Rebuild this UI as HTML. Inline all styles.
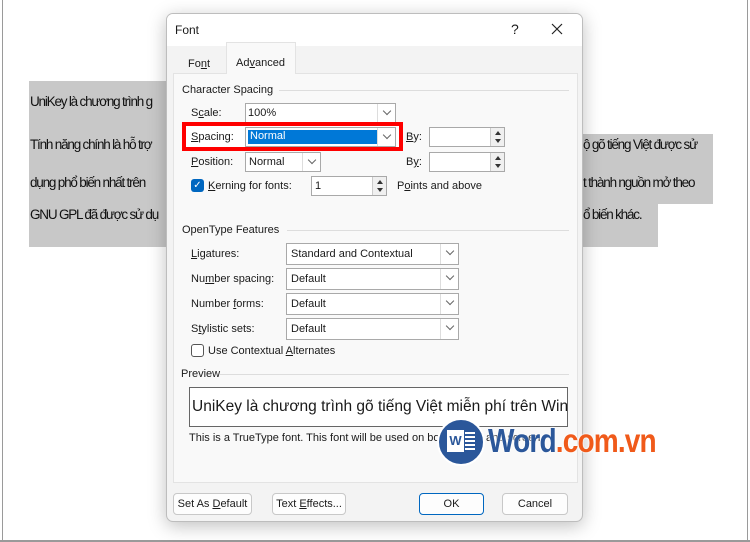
<!DOCTYPE html>
<html><head><meta charset="utf-8"><style>
*{box-sizing:border-box;margin:0;padding:0}
body{width:750px;height:542px;background:#fff;position:relative;overflow:hidden;font-family:"Liberation Sans",sans-serif;font-size:11px;color:#1a1a1a}
.a{position:absolute}
.doc{font-size:13.5px;letter-spacing:-1.2px;color:#111;white-space:nowrap}
.gray{background:#c8c8c8}
.dlg{left:166px;top:13px;width:417px;height:509px;background:#f3f3f3;border:1px solid #bdbdbd;border-radius:7px;box-shadow:0 4px 18px rgba(0,0,0,.25);overflow:hidden}
.title{left:0;top:0;width:417px;height:32px;background:#fff}
.panel{left:6px;top:59px;width:405px;height:410px;background:#f9f9f9;border:1px solid #e3e3e3}
.dd{background:#fff;border:1px solid #a9a9a9}
.dd i{position:absolute;right:0;top:0;bottom:0;width:18px;border-left:1px solid #ddd}
.dd i:after{content:"";position:absolute;left:6px;top:4px;width:5px;height:5px;border-right:1px solid #666;border-bottom:1px solid #666;transform:rotate(45deg)}
.sp{background:#fff;border:1px solid #a9a9a9}
.sp b{position:absolute;right:0;top:0;bottom:0;width:14px;border-left:1px solid #ccc;background:#f0f0f0}
.sp b:before{content:"";position:absolute;left:4px;top:3px;border:3px solid transparent;border-bottom:4px solid #333;border-top:0}
.sp b:after{content:"";position:absolute;left:4px;bottom:3px;border:3px solid transparent;border-top:4px solid #333;border-bottom:0}
.btn{background:#fdfdfd;border:1px solid #c8c8c8;border-radius:4px;text-align:center;line-height:20px}
.line{height:1px;background:#ddd}
</style></head><body>
<div class="a" style="left:2px;top:0;width:1px;height:542px;background:#9a9a9a"></div>
<div class="a" style="left:0;top:540px;width:750px;height:2px;background:#9a9a9a"></div>
<div class="a" style="left:747px;top:0;width:1px;height:542px;background:#9a9a9a"></div>
<div class="a gray" style="left:29px;top:81px;width:140px;height:166px"></div>
<div class="a gray" style="left:583px;top:134px;width:130px;height:70px"></div>
<div class="a gray" style="left:583px;top:204px;width:75px;height:43px"></div>
<div class="a doc" style="left:30px;top:94px">UniKey là chương trình g</div>
<div class="a doc" style="left:30px;top:137px">Tính năng chính là hỗ trợ</div>
<div class="a doc" style="left:30px;top:175px">dụng phổ biến nhất trên</div>
<div class="a doc" style="left:30px;top:207px">GNU GPL đã được sử dụ</div>
<div class="a doc" style="left:583px;top:137px">ộ gõ tiếng Việt được sử</div>
<div class="a doc" style="left:583px;top:175px">t thành nguồn mở theo</div>
<div class="a doc" style="left:583px;top:207px">ổ biến khác.</div>

<div class="a dlg">
 <div class="a title"></div>
 <div class="a" style="left:8px;top:9px;font-size:12px">Font</div>
 <div class="a" style="left:344px;top:7px;font-size:14px">?</div>
 <svg class="a" style="left:383px;top:8px" width="14" height="14"><path d="M2 2L12 12M12 2L2 12" stroke="#222" stroke-width="1.2"/></svg>
 <div class="a panel"></div>
 <div class="a" style="left:59px;top:28px;width:70px;height:32px;background:#f9f9f9;border:1px solid #e3e3e3;border-bottom:none"></div>
 <div class="a" style="left:21px;top:44px"><span>Fo<u>n</u>t</span></div>
 <div class="a" style="left:69px;top:43px">Ad<u>v</u>anced</div>
 <div class="a" style="left:15px;top:70px">Character Spacing</div>
 <div class="a line" style="left:112px;top:76px;width:290px"></div>
 <div class="a" style="left:24px;top:93px">S<u>c</u>ale:</div>
 <div class="a dd" style="left:78px;top:89px;width:151px;height:20px"><span class="a" style="left:2px;top:3px">100%</span><i></i></div>
 <div class="a" style="left:15px;top:108px;width:221px;height:29px;border:4px solid #f00;background:#fff"></div>
 <div class="a" style="left:24px;top:117px"><u>S</u>pacing:</div>
 <div class="a dd" style="left:78px;top:113px;width:151px;height:20px"><span class="a" style="left:2px;top:2px;width:130px;height:14px;background:#0078d7;color:#fff;padding-left:2px;outline:1px dotted #fff">Normal</span><i></i></div>
 <div class="a" style="left:239px;top:117px"><u>B</u>y:</div>
 <div class="a sp" style="left:262px;top:113px;width:76px;height:20px"><b></b></div>
 <div class="a" style="left:24px;top:142px"><u>P</u>osition:</div>
 <div class="a dd" style="left:78px;top:138px;width:76px;height:20px"><span class="a" style="left:3px;top:3px">Normal</span><i></i></div>
 <div class="a" style="left:239px;top:142px">B<u>y</u>:</div>
 <div class="a sp" style="left:262px;top:138px;width:76px;height:20px"><b></b></div>
 <div class="a" style="left:24px;top:165px;width:13px;height:13px;background:#0067c0;border-radius:3px;color:#fff;font-size:10px;line-height:13px;text-align:center">✓</div>
 <div class="a" style="left:41px;top:166px"><u>K</u>erning for fonts:</div>
 <div class="a sp" style="left:144px;top:162px;width:76px;height:20px"><span class="a" style="left:3px;top:3px">1</span><b></b></div>
 <div class="a" style="left:230px;top:166px">P<u>o</u>ints and above</div>

 <div class="a" style="left:15px;top:210px">OpenType Features</div>
 <div class="a line" style="left:120px;top:216px;width:282px"></div>
 <div class="a" style="left:24px;top:234px"><u>L</u>igatures:</div>
 <div class="a dd" style="left:119px;top:229px;width:173px;height:22px"><span class="a" style="left:4px;top:4px">Standard and Contextual</span><i></i></div>
 <div class="a" style="left:24px;top:259px">Nu<u>m</u>ber spacing:</div>
 <div class="a dd" style="left:119px;top:254px;width:173px;height:22px"><span class="a" style="left:4px;top:4px">Default</span><i></i></div>
 <div class="a" style="left:24px;top:284px">Number <u>f</u>orms:</div>
 <div class="a dd" style="left:119px;top:279px;width:173px;height:22px"><span class="a" style="left:4px;top:4px">Default</span><i></i></div>
 <div class="a" style="left:24px;top:309px">S<u>t</u>ylistic sets:</div>
 <div class="a dd" style="left:119px;top:304px;width:173px;height:22px"><span class="a" style="left:4px;top:4px">Default</span><i></i></div>
 <div class="a" style="left:24px;top:330px;width:13px;height:13px;border:1px solid #555;border-radius:3px;background:#fff"></div>
 <div class="a" style="left:41px;top:331px">Use Contextual <u>A</u>lternates</div>

 <div class="a" style="left:14px;top:354px">Preview</div>
 <div class="a line" style="left:53px;top:360px;width:349px"></div>
 <div class="a" style="left:22px;top:373px;width:379px;height:40px;background:#fff;border:1px solid #666;overflow:hidden"><span class="a" style="left:2px;top:10px;font-size:15.5px;white-space:nowrap">UniKey là chương trình gõ tiếng Việt miễn phí trên Windows</span></div>
 <div class="a" style="left:22px;top:418px;white-space:nowrap">This is a TrueType font. This font will be used on both printer and screen.</div>

 <div class="a btn" style="left:6px;top:479px;width:79px;height:22px">Set As <u>D</u>efault</div>
 <div class="a btn" style="left:105px;top:479px;width:74px;height:22px">Text <u>E</u>ffects...</div>
 <div class="a btn" style="left:252px;top:479px;width:65px;height:22px;border-color:#0067c0">OK</div>
 <div class="a btn" style="left:335px;top:479px;width:66px;height:22px">Cancel</div>
</div>

<div class="a" style="left:437px;top:418px;width:48px;height:48px;border-radius:50%;background:#2b579a;border:2px solid #fff"></div>
<div class="a" style="left:447px;top:430px;width:17px;height:22px;background:#fff;color:#2b579a;font-weight:bold;font-size:13px;text-align:center;line-height:22px">W</div>
<div class="a" style="left:465px;top:432px;width:10px;height:18px;background:repeating-linear-gradient(#fff 0 2px,transparent 2px 4px)"></div>
<div class="a" style="left:488px;top:422px;font-size:33px;font-weight:bold;letter-spacing:-1px;transform:scaleX(.85);transform-origin:left;white-space:nowrap;text-shadow:0 0 2px #fff,0 0 2px #fff"><span style="color:#2b579a">Word</span><span style="color:#f05a1a">.com.vn</span></div>
</body></html>
